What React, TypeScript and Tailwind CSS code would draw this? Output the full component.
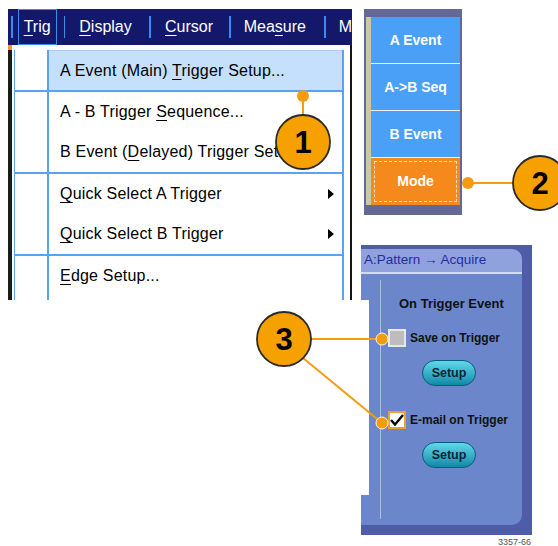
import React from 'react'

const U = ({ children }: { children: React.ReactNode }) => (
  <span className="underline decoration-1 underline-offset-[3px]">{children}</span>
)

const Arrow = () => (
  <svg width="6" height="10" viewBox="0 0 6 10" className="shrink-0">
    <path d="M0 0 L6 5 L0 10 Z" fill="#000" />
  </svg>
)

const Divider = () => <div className="h-[2px] bg-[#5aa2f2]" />

function MenuRow({ children, active, arrow }: { children: React.ReactNode; active?: boolean; arrow?: boolean }) {
  return (
    <div className="flex h-[40px]">
      <div className="w-[34px] border-r-2 border-[#5aa2f2]" />
      <div
        className={`flex flex-1 items-center justify-between pl-[11px] pr-[8px] text-[16px] tracking-[0.2px] text-black whitespace-nowrap ${
          active ? 'bg-[#c4e0fc] border-t border-[#a9cdf5]' : ''
        }`}
      >
        <span>{children}</span>
        {arrow && <Arrow />}
      </div>
    </div>
  )
}

function TriggerMenu() {
  return (
    <div className="absolute left-[8px] top-[9px] flex h-[291px] w-[344px] flex-col overflow-hidden">
      {/* menu bar */}
      <div className="flex h-[36px] items-center bg-[#13186b] text-[16px] text-white whitespace-nowrap">
        <div className="ml-[3px] h-[22px] w-[2px] bg-[#3b8cf0]" />
        <div className="ml-[5px] flex h-full w-[45px] items-center justify-center border border-[#3b8cf0]">
          <span><U>T</U>rig</span>
        </div>
        <div className="ml-[7px] h-[22px] w-[2px] bg-[#3b8cf0]" />
        <span className="ml-[14px] w-[52px]"><U>D</U>isplay</span>
        <div className="ml-[18px] h-[22px] w-[2px] bg-[#3b8cf0]" />
        <span className="ml-[14px] w-[49px]"><U>C</U>ursor</span>
        <div className="ml-[16px] h-[22px] w-[2px] bg-[#3b8cf0]" />
        <span className="ml-[13px] w-[63px]">Mea<U>s</U>ure</span>
        <div className="ml-[18px] h-[22px] w-[2px] bg-[#3b8cf0]" />
        <span className="ml-[13px]">M</span>
      </div>

      {/* dropdown */}
      <div className="flex flex-1">
        <div className="flex w-[4px] flex-col bg-[#1c1c1c]">
          <div className="h-[5px] bg-[#f39a1e]" />
        </div>
        <div className="flex flex-1 flex-col bg-white pl-[2px] pr-[1px] pt-[5px]">
          <div className="flex flex-1 flex-col border-l border-r-2 border-[#5aa2f2]">
            <MenuRow active>A Event (Main) <U>T</U>rigger Setup...</MenuRow>
            <Divider />
            <MenuRow>A - B Trigger <U>S</U>equence...</MenuRow>
            <MenuRow>B Event (<U>D</U>elayed) Trigger Setup...</MenuRow>
            <Divider />
            <MenuRow arrow><U>Q</U>uick Select A Trigger</MenuRow>
            <MenuRow arrow><U>Q</U>uick Select B Trigger</MenuRow>
            <Divider />
            <MenuRow><U>E</U>dge Setup...</MenuRow>
            <div className="flex flex-1">
              <div className="w-[34px] border-r-2 border-[#5aa2f2]" />
            </div>
          </div>
        </div>
        <div className="w-[5px] bg-white" />
        <div className="w-[2px] bg-[#151515]" />
      </div>
    </div>
  )
}

function ButtonStack() {
  const items = ['A Event', 'A->B Seq', 'B Event']
  return (
    <div className="absolute left-[364px] top-[9px] flex h-[206px] w-[98px] bg-[#636996] pb-[10px] pl-[2px] pr-[2px] pt-[8px]">
      <div className="w-[5px] bg-[#c9c9a3]" />
      <div className="flex flex-1 flex-col text-[14px] font-bold text-white">
        {items.map((label) => (
          <div key={label} className="flex h-[47px] items-center justify-center border-b border-[#e8f2ff] bg-[#4aa0f6]">
            {label}
          </div>
        ))}
        <div className="flex flex-1 bg-[#f6891c] p-[3px]">
          <div className="flex flex-1 items-center justify-center border border-dashed border-[#ffe4c4]">Mode</div>
        </div>
      </div>
    </div>
  )
}

function Checkbox({ checked }: { checked?: boolean }) {
  return checked ? (
    <div className="flex h-[18px] w-[18px] items-center justify-center border-2 border-[#f0a030] bg-white">
      <svg width="14" height="12" viewBox="0 0 14 12">
        <path d="M1 6 L5 10.5 L13 1" fill="none" stroke="#000" strokeWidth="2.4" />
      </svg>
    </div>
  ) : (
    <div className="h-[18px] w-[18px] border-2 border-[#e8e8e8] bg-[#bdbdbd]" />
  )
}

const SetupButton = () => (
  <div className="flex h-[26px] w-[54px] items-center justify-center rounded-full border border-[#0b5a78] bg-gradient-to-b from-[#5fd8ec] to-[#0a8aa6] text-[12.5px] font-bold text-[#0b2438]">
    Setup
  </div>
)

function ActionPanel() {
  return (
    <div className="absolute left-[361px] top-[245px] flex h-[290px] w-[171px] bg-[#4f5caa] pb-[10px] pr-[10px] pt-[4px]">
      <div className="flex flex-1 flex-col overflow-hidden rounded-br-[10px] rounded-tr-[10px]">
        <div className="flex h-[25px] items-center border-b-2 border-[#d3daf5] bg-[#90a2de] pl-[3px] text-[13.5px] text-[#2a2a9e] whitespace-nowrap">
          A:Pattern → Acquire
        </div>
        <div className="flex flex-1 bg-[#6b86cb] pl-[19px]">
          <div className="my-[6px] w-[1px] bg-[#aebdea]" />
          <div className="flex flex-1 flex-col text-[#111]">
            <div className="ml-[18px] mt-[22px] h-[16px] text-[13px] font-bold leading-[16px] whitespace-nowrap">On Trigger Event</div>
            <div className="ml-[7px] mt-[17px] flex items-center gap-[4px]">
              <Checkbox />
              <span className="text-[12px] font-bold whitespace-nowrap">Save on Trigger</span>
            </div>
            <div className="ml-[41px] mt-[13px]">
              <SetupButton />
            </div>
            <div className="ml-[7px] mt-[25px] flex items-center gap-[4px]">
              <Checkbox checked />
              <span className="text-[12px] font-bold whitespace-nowrap">E-mail on Trigger</span>
            </div>
            <div className="ml-[41px] mt-[13px]">
              <SetupButton />
            </div>
          </div>
        </div>
      </div>
      {/* left screenshot's white area cuts into the panel edge */}
      <div className="absolute left-0 top-[55px] h-[195px] w-[8px] bg-white" />
    </div>
  )
}

function Callout({ cx, cy, n }: { cx: number; cy: number; n: string }) {
  return (
    <g>
      <circle cx={cx} cy={cy} r="27" fill="#f7a100" stroke="#2a2a2a" strokeWidth="1.8" />
      <text
        x={cx}
        y={cy + 11}
        textAnchor="middle"
        fontFamily="'Liberation Sans', Arial, sans-serif"
        fontWeight="bold"
        fontSize="31"
        fill="#000"
      >
        {n}
      </text>
    </g>
  )
}

function Callouts() {
  const orange = '#f39c12'
  return (
    <svg className="pointer-events-none absolute left-0 top-0" width="558" height="546" viewBox="0 0 558 546">
      {/* 1 */}
      <line x1="303" y1="96" x2="303" y2="116" stroke={orange} strokeWidth="2" />
      <circle cx="303" cy="96" r="6" fill={orange} />
      <Callout cx={303} cy={142} n="1" />
      {/* 2 */}
      <line x1="468" y1="183" x2="513" y2="183" stroke={orange} strokeWidth="2" />
      <circle cx="468" cy="183" r="6" fill={orange} />
      <Callout cx={540} cy={183} n="2" />
      {/* 3 */}
      <line x1="311" y1="339" x2="382" y2="339" stroke={orange} strokeWidth="2" />
      <line x1="303" y1="358" x2="382" y2="423" stroke={orange} strokeWidth="2" />
      <circle cx="382" cy="339" r="6" fill={orange} stroke="#fff3e0" strokeWidth="1" />
      <circle cx="382" cy="423" r="6" fill={orange} stroke="#fff3e0" strokeWidth="1" />
      <Callout cx={284} cy={339} n="3" />
    </svg>
  )
}

export default function App() {
  return (
    <div className="relative h-[546px] w-[558px] overflow-hidden bg-white font-['Liberation_Sans',Arial,sans-serif]">
      <TriggerMenu />
      <ButtonStack />
      <ActionPanel />
      <Callouts />
      <span className="absolute left-[498px] top-[537px] text-[9px] leading-[10px] text-[#555]">3357-66</span>
    </div>
  )
}
